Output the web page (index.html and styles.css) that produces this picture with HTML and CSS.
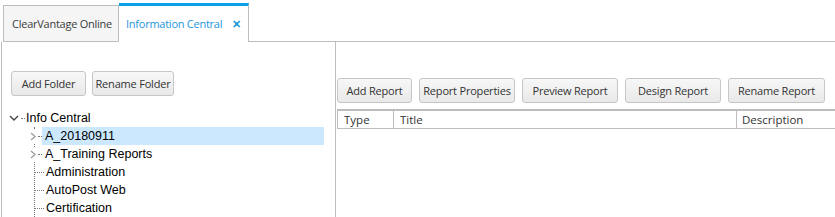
FILE: index.html
```html
<!DOCTYPE html>
<html>
<head>
<meta charset="utf-8">
<link rel="stylesheet" href="styles.css">
</head>
<body>
<div class="tabs">
  <div class="tab">ClearVantage Online</div>
  <div class="tab active">Information Central <span class="close">&#x2715;</span></div>
  <div class="tab-fill"></div>
</div>
<div class="content">
  <div class="left">
    <div class="btns">
      <button class="btn w74">Add Folder</button>
      <button class="btn w82">Rename Folder</button>
    </div>
    <div class="tree">
      <div class="row root">
        <svg class="chev-down" width="10" height="6" viewBox="0 0 10 6"><path d="M1 1 L5 5 L9 1" fill="none" stroke="#444" stroke-width="1.4"/></svg>
        <span class="dots"></span>
        <span class="label">Info Central</span>
      </div>
      <div class="children">
        <div class="row">
          <span class="toggle"><svg width="7" height="9" viewBox="0 0 7 9"><path d="M1 1 L5 4.5 L1 8" fill="none" stroke="#a0a0a0" stroke-width="1.4"/></svg></span>
          <span class="dots short"></span>
          <span class="label sel">A_20180911</span>
        </div>
        <div class="row">
          <span class="toggle"><svg width="7" height="9" viewBox="0 0 7 9"><path d="M1 1 L5 4.5 L1 8" fill="none" stroke="#a0a0a0" stroke-width="1.4"/></svg></span>
          <span class="dots short"></span>
          <span class="label">A_Training Reports</span>
        </div>
        <div class="row leaf"><span class="hline"></span><span class="label">Administration</span></div>
        <div class="row leaf"><span class="hline"></span><span class="label">AutoPost Web</span></div>
        <div class="row leaf"><span class="hline"></span><span class="label">Certification</span></div>
      </div>
    </div>
  </div>
  <div class="right">
    <div class="btns rbtns">
      <button class="btn w75">Add Report</button>
      <button class="btn w96">Report Properties</button>
      <button class="btn w96">Preview Report</button>
      <button class="btn w96">Design Report</button>
      <button class="btn w97">Rename Report</button>
    </div>
    <div class="grid">
      <div class="ghead">
        <div class="col c1">Type</div>
        <div class="col c2">Title</div>
        <div class="col c3">Description</div>
      </div>
    </div>
  </div>
</div>
</body>
</html>
```
FILE: styles.css
```css
* { box-sizing: border-box; }
html, body { margin: 0; padding: 0; background: #fff; }
body { width: 835px; height: 217px; overflow: hidden; font-family: "Open Sans", "Noto Sans", sans-serif; }

.tabs { display: flex; align-items: flex-end; height: 42px; padding-left: 3px; }
.tab { height: 37px; padding: 0 0 0 8px; font-size: 11px; letter-spacing: -0.25px; white-space: nowrap; color: #3c3c3c; background: #f5f5f5; border: 1px solid #bdbdbd; display: flex; align-items: center; width: 116px; }
.tab.active { height: 39px; width: 130px; background: #fff; color: #1a96dc; border: none; border-top: 3px solid #0ba1ea; border-right: 1px solid #bdbdbd; padding: 0 0 2px 7px; }
.close { margin-left: 10px; font-size: 11px; font-weight: bold; color: #1a96dc; }
.tab-fill { flex: 1; border-bottom: 1px solid #bdbdbd; height: 1px; margin-bottom: 0; }

.content { display: flex; margin-left: 1px; border-left: 1px solid #bdbdbd; height: 175px; }
.left { width: 334px; border-right: 1px solid #bdbdbd; padding: 29px 0 0 9px; }
.right { flex: 1; padding: 36px 0 0 1px; }

.btns { display: flex; gap: 6px; }
.rbtns { gap: 7px; }
.btn { height: 25px; font-family: "Open Sans", sans-serif; font-size: 11px; color: #333; background: linear-gradient(#f7f7f7, #e9e9e9); border: 1px solid #c6c6c6; border-radius: 3px; padding: 0; margin: 0; letter-spacing: -0.2px; }
.w74 { width: 75px; }
.w82 { width: 82px; }
.w75 { width: 75px; }
.w96 { width: 96px; }
.w97 { width: 97px; }

.tree { margin-top: 13px; margin-left: -9px; font-family: "Liberation Sans", Arial, sans-serif; font-size: 12.5px; color: #000; }
.row { display: flex; align-items: center; height: 18px; }
.root { padding-left: 7px; }
.chev-down { margin-right: 2px; }
.dots { width: 4px; border-top: 1px dotted #777; margin-right: 0; }
.dots.short { width: 4px; margin-right: 0; }
.children { margin-left: 32px; border-left: 1px dotted #777; }
.toggle { width: 8px; height: 14px; margin-left: -5px; background: #fff; display: flex; align-items: center; }
.label { padding: 0 1px; line-height: 18px; }
.label.sel { background: #cce8ff; width: 282px; padding-left: 3px; }
.children .label { padding-left: 3px; }
.hline { width: 9px; border-top: 1px dotted #777; }
.leaf .label { padding-left: 2px; }

.grid { margin-top: 6px; border-top: 2px solid #bdbdbd; border-left: 1px solid #bdbdbd; }
.ghead { display: flex; height: 18px; border-bottom: 1px solid #bdbdbd; font-family: "Open Sans", sans-serif; font-size: 11.5px; color: #333; }
.col { padding-left: 6px; line-height: 17px; }
.c1 { width: 56px; border-right: 1px solid #bdbdbd; }
.c2 { width: 343px; border-right: 1px solid #bdbdbd; }
.c3 { flex: 1; padding-left: 5px; }
```
